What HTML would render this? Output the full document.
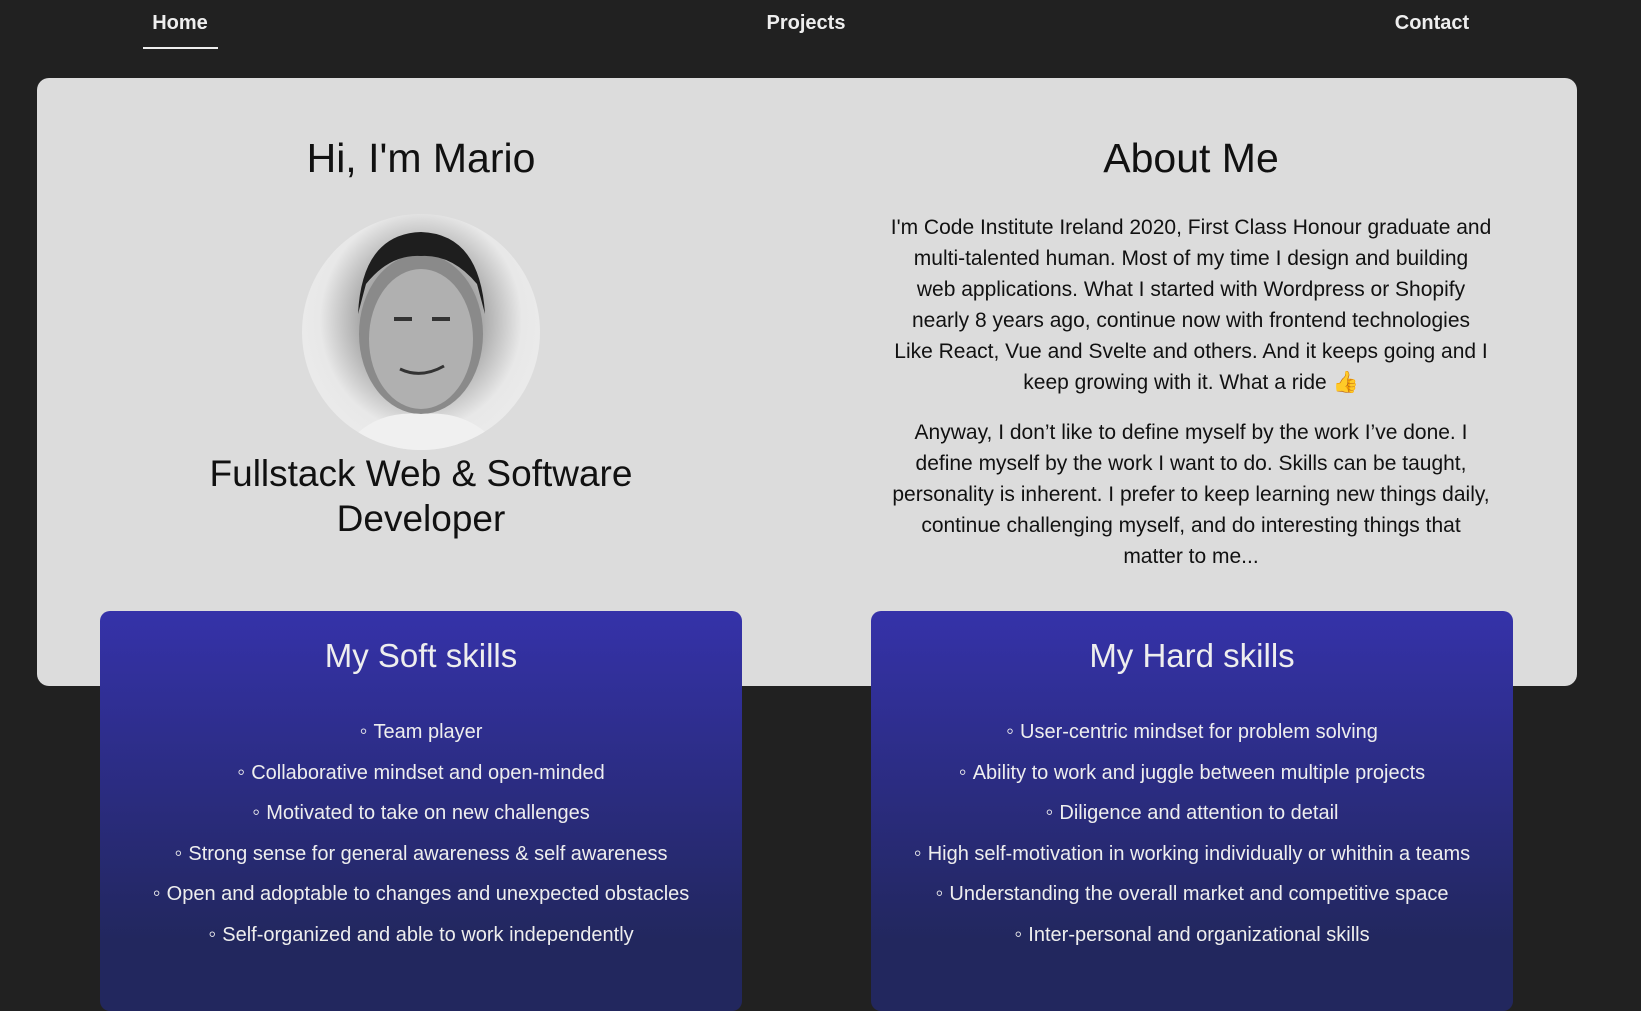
<!DOCTYPE html>
<html><head><meta charset="utf-8"><style>
*{margin:0;padding:0;box-sizing:border-box}
html,body{width:1641px;height:937px;overflow:hidden;background:#212121;font-family:"Liberation Sans",sans-serif}
.nav{position:absolute;top:12px;font-weight:bold;color:#eee;font-size:20px;transform:translateX(-50%)}
.ul{position:absolute;left:143px;top:47px;width:75px;height:2px;background:#eee}
.card{position:absolute;left:37px;top:78px;width:1540px;height:608px;background:#dcdcdc;border-radius:12px}
.c{position:absolute;text-align:center;color:#111}
h1{font-weight:normal;font-size:41px;line-height:48px}
.p{font-size:21px;line-height:31px;letter-spacing:0;white-space:nowrap}
.photo{position:absolute;left:302px;top:214px;width:238px;height:236px;border-radius:50%;background:radial-gradient(ellipse at 50% 45%,#bdbdbd 0,#9a9a9a 30%,#e8e8e8 60%,#efefef 100%);overflow:hidden}
.box{position:absolute;top:611px;width:642px;height:400px;border-radius:10px;background:linear-gradient(#3532a9,#22275e 330px)}
.box h2{font-weight:normal;font-size:33px;color:#eee;text-align:center;margin-top:25px;line-height:40px}
.box ul{list-style:none;text-align:center;color:#eee;font-size:20px;margin-top:35px}
.box li{height:40.5px;line-height:40.5px}
.box li:before{content:"◦ ";font-size:22px}
</style></head><body>
<div class="nav" style="left:180px">Home</div>
<div class="ul"></div>
<div class="nav" style="left:806px">Projects</div>
<div class="nav" style="left:1432px">Contact</div>
<div class="card"></div>
<div class="c" style="left:121px;width:600px;top:134px"><h1>Hi, I'm Mario</h1></div>
<div class="photo">
<svg width="238" height="236" viewBox="0 0 238 236">
<ellipse cx="119" cy="120" rx="62" ry="80" fill="#8a8a8a"/>
<path d="M56 100 Q60 20 119 18 Q178 20 183 100 L175 70 Q150 40 119 42 Q88 40 64 70Z" fill="#1e1e1e"/>
<ellipse cx="119" cy="125" rx="52" ry="70" fill="#b0b0b0"/>
<path d="M92 105 h18 M130 105 h18" stroke="#333" stroke-width="4"/>
<path d="M98 155 Q119 165 142 152" stroke="#333" stroke-width="3" fill="none"/>
<path d="M40 236 Q70 195 119 200 Q170 195 200 236Z" fill="#f0f0f0"/>
</svg></div>
<div class="c" style="left:121px;width:600px;top:451px"><h1 style="font-size:37px;line-height:45px">Fullstack Web &amp; Software<br>Developer</h1></div>
<div class="c" style="left:891px;width:600px;top:134px"><h1>About Me</h1></div>
<div class="c p" style="left:791px;width:800px;top:212px">I'm Code Institute Ireland 2020, First Class Honour graduate and<br>multi-talented human. Most of my time I design and building<br>web applications. What I started with Wordpress or Shopify<br>nearly 8 years ago, continue now with frontend technologies<br>Like React, Vue and Svelte and others. And it keeps going and I<br>keep growing with it. What a ride 👍</div>
<div class="c p" style="left:791px;width:800px;top:417px">Anyway, I don’t like to define myself by the work I’ve done. I<br>define myself by the work I want to do. Skills can be taught,<br>personality is inherent. I prefer to keep learning new things daily,<br>continue challenging myself, and do interesting things that<br>matter to me...</div>
<div class="box" style="left:100px"><h2>My Soft skills</h2><ul>
<li>Team player</li><li>Collaborative mindset and open-minded</li><li>Motivated to take on new challenges</li><li>Strong sense for general awareness &amp; self awareness</li><li>Open and adoptable to changes and unexpected obstacles</li><li>Self-organized and able to work independently</li></ul></div>
<div class="box" style="left:871px"><h2>My Hard skills</h2><ul>
<li>User-centric mindset for problem solving</li><li>Ability to work and juggle between multiple projects</li><li>Diligence and attention to detail</li><li>High self-motivation in working individually or whithin a teams</li><li>Understanding the overall market and competitive space</li><li>Inter-personal and organizational skills</li></ul></div>
</body></html>
